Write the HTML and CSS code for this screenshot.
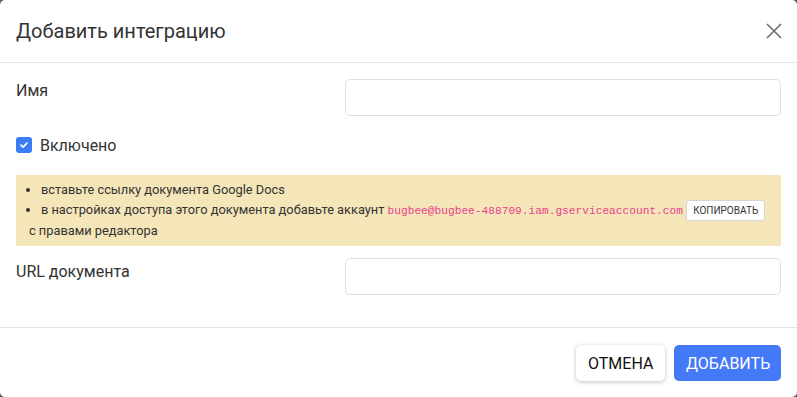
FILE: index.html
```html
<!DOCTYPE html>
<html lang="ru">
<head>
<meta charset="utf-8">
<title>Добавить интеграцию</title>
<link rel="stylesheet" href="styles.css">
</head>
<body>
<div class="modal">
  <div class="modal-header">
    <h5 class="modal-title">Добавить интеграцию</h5>
    <button class="close" type="button" aria-label="Закрыть">
      <svg width="16" height="16" viewBox="0 0 16 16"><path d="M1 1L15 15M15 1L1 15" stroke="#6b6b6b" stroke-width="1.6" fill="none"/></svg>
    </button>
  </div>
  <div class="modal-body">
    <div class="row row-name">
      <label class="label">Имя</label>
      <input class="input" type="text">
    </div>
    <label class="check">
      <span class="checkbox"><svg width="10" height="10" viewBox="0 0 10 10"><path d="M2 5.2L4.1 7.2L8 3" stroke="#fff" stroke-width="1.7" fill="none" stroke-linecap="round" stroke-linejoin="round"/></svg></span>
      <span>Включено</span>
    </label>
    <div class="alert">
      <ul class="list">
        <li>вставьте ссылку документа Google Docs</li>
        <li class="nowrap">в настройках доступа этого документа добавьте аккаунт <code class="email">bugbee@bugbee-488709.iam.gserviceaccount.com</code> <button class="copy" type="button">КОПИРОВАТЬ</button></li>
      </ul>
      <div class="line">с правами редактора</div>
    </div>
    <div class="row row-url">
      <label class="label label-url">URL документа</label>
      <input class="input" type="text">
    </div>
  </div>
  <div class="modal-footer">
    <button class="btn btn-light" type="button">ОТМЕНА</button>
    <button class="btn btn-primary" type="button">ДОБАВИТЬ</button>
  </div>
</div>
</body>
</html>
```
FILE: styles.css
```css
html, body {
  margin: 0;
  padding: 0;
  height: 100%;
}
body {
  background: #5a5a5a;
  font-family: Roboto, "Noto Sans", sans-serif;
  color: #333;
}
.modal {
  box-sizing: border-box;
  width: 797px;
  height: 397px;
  background: #fff;
  border-radius: 5px;
  overflow: hidden;
  display: flex;
  flex-direction: column;
}
.modal-header {
  display: flex;
  align-items: center;
  justify-content: space-between;
  padding: 16px 15px 16px 16px;
  border-bottom: 1px solid #e2e2e8;
  height: 30px;
}
.modal-title {
  margin: 0;
  font-size: 20px;
  font-weight: 400;
  line-height: 30px;
  color: #333;
}
.close {
  border: 0;
  background: none;
  padding: 0;
  width: 16px;
  height: 16px;
  display: block;
}
.close svg { display: block; }
.modal-body {
  padding: 16px 16px 0;
  height: 248px;
  border-bottom: 1px solid #e2e2e8;
}
.row {
  display: grid;
  grid-template-columns: 329px 1fr;
}
.label {
  font-size: 16px;
  line-height: 24px;
  color: #333;
}
.label-url {
  padding-top: 2px;
}
.input {
  box-sizing: border-box;
  height: 37px;
  width: 100%;
  border: 1px solid #dfdfe6;
  border-radius: 5px;
  background: #fff;
  margin: 0;
}
.check {
  display: flex;
  align-items: center;
  gap: 8px;
  margin-top: 17px;
  height: 24px;
  font-size: 16px;
  color: #333;
}
.checkbox {
  width: 16px;
  height: 16px;
  border-radius: 3px;
  background: #3c7bf6;
  display: flex;
  align-items: center;
  justify-content: center;
}
.checkbox svg { display: block; }
.alert {
  margin-top: 18px;
  background: #f5e6b9;
  padding: 5px 13px;
  font-size: 12.8px;
  line-height: 20px;
  color: #333;
}
.list {
  margin: 0;
  padding-left: 12px;
}
.nowrap {
  white-space: nowrap;
}
.email {
  font-family: "Liberation Mono", monospace;
  font-size: 11.2px;
  color: #e83e8c;
}
.copy {
  font-family: Roboto, sans-serif;
  font-size: 10px;
  height: 21px;
  padding: 0 6px;
  background: #fff;
  border: 1px solid #d6d6d6;
  border-radius: 3px;
  color: #333;
  vertical-align: middle;
  margin-left: 0;
}
.row-url {
  margin-top: 12px;
}
.modal-footer {
  display: flex;
  justify-content: flex-end;
  gap: 9px;
  padding: 17px 16px 0;
}
.btn {
  height: 36px;
  border: 0;
  border-radius: 5px;
  font-family: Roboto, sans-serif;
  font-size: 16px;
  padding: 0 12px;
}
.btn-light {
  width: 89px;
  background: #fff;
  color: #111;
  box-shadow: 0 1px 4px rgba(0,0,0,0.25);
}
.btn-primary {
  width: 107px;
  background: #4479f7;
  color: #fff;
}
```
